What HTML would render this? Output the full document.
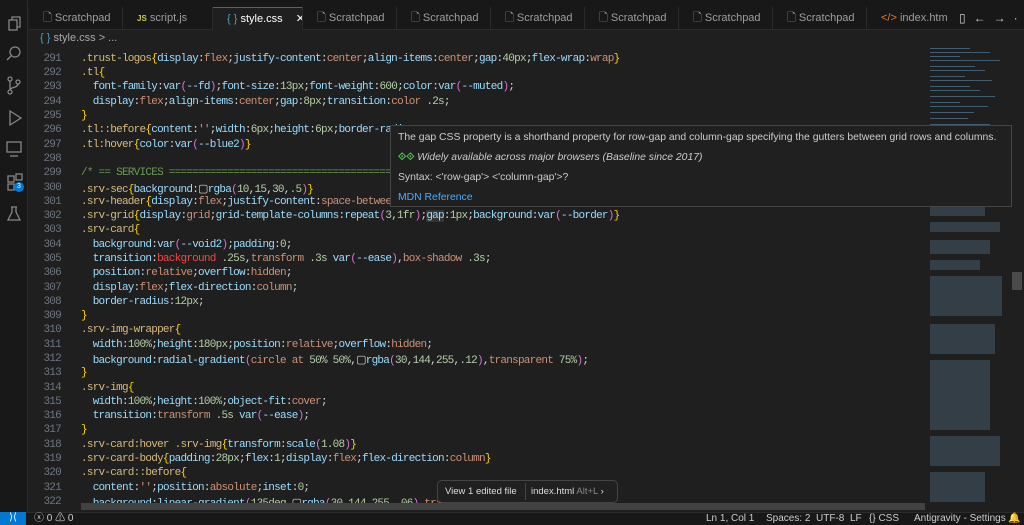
<!DOCTYPE html>
<html><head><meta charset="utf-8"><style>
*{margin:0;padding:0;box-sizing:border-box}
body{width:1024px;height:525px;background:#1f1f1f;overflow:hidden;position:relative;font-family:"Liberation Sans",sans-serif;color:#ccc}
.top{position:absolute;left:0;top:0;width:1024px;height:8px;background:#181818}
.act{position:absolute;left:0;top:0;width:28px;height:512px;background:#181818;border-right:1px solid #2b2b2b}
.tabs{position:absolute;left:29px;top:7px;width:995px;height:23px;background:#181818;border-bottom:1px solid #2b2b2b}
.tab{position:absolute;top:0;height:23px;border-right:1px solid #2b2b2b;font-size:11px;line-height:23px;color:#9d9d9d;padding-left:14px;white-space:nowrap;overflow:hidden}
.tab.act2{background:#1f1f1f;color:#fff;border-top:1px solid #0078d4}
.bc{position:absolute;left:40px;top:32px;font-size:11px;color:#a9a9a9}
.code{position:absolute;left:29px;top:46px;width:896px;height:464px;overflow:hidden;font-family:"Liberation Mono",monospace;font-size:11px;letter-spacing:-0.75px}
.ln{position:absolute;left:0;width:32px;text-align:right;color:#6e7681}
.tx{position:absolute;left:52px;white-space:pre;color:#d4d4d4}
.s{color:#d7ba7d}.p{color:#9cdcfe}.v{color:#ce9178}.n{color:#b5cea8}.b{color:#ffd700}.q{color:#da70d6}.c{color:#6a9955}
.mini{position:absolute;left:925px;top:44px;width:85px;height:466px}
.status{position:absolute;left:0;top:512px;width:1024px;height:13px;background:#181818;border-top:1px solid #2b2b2b;font-size:10px;color:#ccc;line-height:12px}
.hover{position:absolute;left:390px;top:125px;width:622px;height:82px;background:#202020;border:1px solid #454545;font-size:10.4px;color:#ccc;overflow:hidden}
.hover div{position:absolute;left:7px;white-space:nowrap}
.wid{position:absolute;left:437px;top:480px;width:181px;height:23px;background:#202020;border:1px solid #454545;border-radius:5px;font-size:9.5px;line-height:21px;color:#ddd;white-space:nowrap}
</style></head><body>
<div class="top"></div>
<div class="act">
<svg width="28" height="240" style="position:absolute;left:0;top:8px" fill="none" stroke="#868686" stroke-width="1.3">
<rect x="9" y="12" width="8" height="10"/><path d="M12 12v-3h8v10h-3"/>
<circle cx="15" cy="44" r="5"/><path d="M11 48l-4 4"/>
<circle cx="10" cy="71" r="2"/><circle cx="10" cy="84" r="2"/><circle cx="18" cy="74" r="2"/><path d="M10 73v9M18 76c0 4-8 3-8 6"/>
<path d="M10 103v14l11-7z"/>
<rect x="7" y="134" width="14" height="10"/><path d="M10 148h8"/>
<rect x="8" y="168" width="6" height="6"/><rect x="8" y="176" width="6" height="6"/><rect x="16" y="176" width="6" height="6"/><rect x="16" y="166" width="6" height="6"/>
<path d="M11 199h6M12 199v5l-4 8h12l-4-8v-5"/>
</svg>
<div style="position:absolute;left:14px;top:182px;width:10px;height:10px;border-radius:5px;background:#0078d4;color:#fff;font-size:7px;text-align:center;line-height:10px">3</div>
</div>
<div class="tabs">
<div class="tab" style="left:0;width:94px">🗋 Scratchpad</div>
<div class="tab" style="left:94px;width:90px"><span style="color:#cbcb41;font-size:8px;font-weight:bold">JS</span> script.js</div>
<div class="tab act2" style="left:184px;width:90px"><span style="color:#519aba">{ }</span> style.css <span style="margin-left:10px">✕</span></div>
<div class="tab" style="left:274px;width:94px">🗋 Scratchpad</div>
<div class="tab" style="left:368px;width:94px">🗋 Scratchpad</div>
<div class="tab" style="left:462px;width:94px">🗋 Scratchpad</div>
<div class="tab" style="left:556px;width:94px">🗋 Scratchpad</div>
<div class="tab" style="left:650px;width:94px">🗋 Scratchpad</div>
<div class="tab" style="left:744px;width:94px">🗋 Scratchpad</div>
<div class="tab" style="left:838px;width:90px;border:none"><span style="color:#e37933">&lt;/&gt;</span> index.htm</div>
<div style="position:absolute;left:930px;top:0;font-size:12px;line-height:23px;color:#ccc;letter-spacing:8px;white-space:nowrap">▯←→···</div>
</div>
<div class="bc"><span style="color:#519aba">{ }</span> style.css &gt; ...</div>
<div class="code">
<div class="ln" style="top:7px">291</div><div class="tx" style="top:7px"><span class="s">.trust-logos</span><span class="b">{</span><span class="p">display</span>:<span class="v">flex</span>;<span class="p">justify-content</span>:<span class="v">center</span>;<span class="p">align-items</span>:<span class="v">center</span>;<span class="p">gap</span>:<span class="n">40px</span>;<span class="p">flex-wrap</span>:<span class="v">wrap</span><span class="b">}</span></div>
<div class="ln" style="top:21px">292</div><div class="tx" style="top:21px"><span class="s">.tl</span><span class="b">{</span></div>
<div class="ln" style="top:35px">293</div><div class="tx" style="top:35px">  <span class="p">font-family</span>:<span class="p">var</span><span class="q">(</span><span class="p">--fd</span><span class="q">)</span>;<span class="p">font-size</span>:<span class="n">13px</span>;<span class="p">font-weight</span>:<span class="n">600</span>;<span class="p">color</span>:<span class="p">var</span><span class="q">(</span><span class="p">--muted</span><span class="q">)</span>;</div>
<div class="ln" style="top:50px">294</div><div class="tx" style="top:50px">  <span class="p">display</span>:<span class="v">flex</span>;<span class="p">align-items</span>:<span class="v">center</span>;<span class="p">gap</span>:<span class="n">8px</span>;<span class="p">transition</span>:<span class="v">color</span> <span class="n">.2s</span>;</div>
<div class="ln" style="top:64px">295</div><div class="tx" style="top:64px"><span class="b">}</span></div>
<div class="ln" style="top:78px">296</div><div class="tx" style="top:78px"><span class="s">.tl::before</span><span class="b">{</span><span class="p">content</span>:<span class="v">''</span>;<span class="p">width</span>:<span class="n">6px</span>;<span class="p">height</span>:<span class="n">6px</span>;<span class="p">border-radius</span></div>
<div class="ln" style="top:93px">297</div><div class="tx" style="top:93px"><span class="s">.tl:hover</span><span class="b">{</span><span class="p">color</span>:<span class="p">var</span><span class="q">(</span><span class="p">--blue2</span><span class="q">)</span><span class="b">}</span></div>
<div class="ln" style="top:107px">298</div>
<div class="ln" style="top:121px">299</div><div class="tx c" style="top:121px">/* == SERVICES ======================================================================</div>
<div class="ln" style="top:136px">300</div><div class="tx" style="top:136px"><span class="s">.srv-sec</span><span class="b">{</span><span class="p">background</span>:▢<span class="p">rgba</span><span class="q">(</span><span class="n">10</span>,<span class="n">15</span>,<span class="n">30</span>,<span class="n">.5</span><span class="q">)</span><span class="b">}</span></div>
<div class="ln" style="top:150px">301</div><div class="tx" style="top:150px"><span class="s">.srv-header</span><span class="b">{</span><span class="p">display</span>:<span class="v">flex</span>;<span class="p">justify-content</span>:<span class="v">space-between</span></div>
<div class="ln" style="top:164px">302</div><div class="tx" style="top:164px"><span class="s">.srv-grid</span><span class="b">{</span><span class="p">display</span>:<span class="v">grid</span>;<span class="p">grid-template-columns</span>:<span class="p">repeat</span><span class="q">(</span><span class="n">3</span>,<span class="n">1fr</span><span class="q">)</span>;<span class="p" style="background:#333">gap</span>:<span class="n">1px</span>;<span class="p">background</span>:<span class="p">var</span><span class="q">(</span><span class="p">--border</span><span class="q">)</span><span class="b">}</span></div>
<div class="ln" style="top:178px">303</div><div class="tx" style="top:178px"><span class="s">.srv-card</span><span class="b">{</span></div>
<div class="ln" style="top:193px">304</div><div class="tx" style="top:193px">  <span class="p">background</span>:<span class="p">var</span><span class="q">(</span><span class="p">--void2</span><span class="q">)</span>;<span class="p">padding</span>:<span class="n">0</span>;</div>
<div class="ln" style="top:207px">305</div><div class="tx" style="top:207px">  <span class="p">transition</span>:<span style="color:#f44747">background</span> <span class="n">.25s</span>,<span class="v">transform</span> <span class="n">.3s</span> <span class="p">var</span><span class="q">(</span><span class="p">--ease</span><span class="q">)</span>,<span class="v">box-shadow</span> <span class="n">.3s</span>;</div>
<div class="ln" style="top:221px">306</div><div class="tx" style="top:221px">  <span class="p">position</span>:<span class="v">relative</span>;<span class="p">overflow</span>:<span class="v">hidden</span>;</div>
<div class="ln" style="top:236px">307</div><div class="tx" style="top:236px">  <span class="p">display</span>:<span class="v">flex</span>;<span class="p">flex-direction</span>:<span class="v">column</span>;</div>
<div class="ln" style="top:250px">308</div><div class="tx" style="top:250px">  <span class="p">border-radius</span>:<span class="n">12px</span>;</div>
<div class="ln" style="top:264px">309</div><div class="tx" style="top:264px"><span class="b">}</span></div>
<div class="ln" style="top:278px">310</div><div class="tx" style="top:278px"><span class="s">.srv-img-wrapper</span><span class="b">{</span></div>
<div class="ln" style="top:293px">311</div><div class="tx" style="top:293px">  <span class="p">width</span>:<span class="n">100%</span>;<span class="p">height</span>:<span class="n">180px</span>;<span class="p">position</span>:<span class="v">relative</span>;<span class="p">overflow</span>:<span class="v">hidden</span>;</div>
<div class="ln" style="top:307px">312</div><div class="tx" style="top:307px">  <span class="p">background</span>:<span class="p">radial-gradient</span><span class="q">(</span><span class="v">circle</span> <span class="v">at</span> <span class="n">50%</span> <span class="n">50%</span>,▢<span class="p">rgba</span><span class="q">(</span><span class="n">30</span>,<span class="n">144</span>,<span class="n">255</span>,<span class="n">.12</span><span class="q">)</span>,<span class="v">transparent</span> <span class="n">75%</span><span class="q">)</span>;</div>
<div class="ln" style="top:321px">313</div><div class="tx" style="top:321px"><span class="b">}</span></div>
<div class="ln" style="top:336px">314</div><div class="tx" style="top:336px"><span class="s">.srv-img</span><span class="b">{</span></div>
<div class="ln" style="top:350px">315</div><div class="tx" style="top:350px">  <span class="p">width</span>:<span class="n">100%</span>;<span class="p">height</span>:<span class="n">100%</span>;<span class="p">object-fit</span>:<span class="v">cover</span>;</div>
<div class="ln" style="top:364px">316</div><div class="tx" style="top:364px">  <span class="p">transition</span>:<span class="v">transform</span> <span class="n">.5s</span> <span class="p">var</span><span class="q">(</span><span class="p">--ease</span><span class="q">)</span>;</div>
<div class="ln" style="top:378px">317</div><div class="tx" style="top:378px"><span class="b">}</span></div>
<div class="ln" style="top:393px">318</div><div class="tx" style="top:393px"><span class="s">.srv-card:hover .srv-img</span><span class="b">{</span><span class="p">transform</span>:<span class="p">scale</span><span class="q">(</span><span class="n">1.08</span><span class="q">)</span><span class="b">}</span></div>
<div class="ln" style="top:407px">319</div><div class="tx" style="top:407px"><span class="s">.srv-card-body</span><span class="b">{</span><span class="p">padding</span>:<span class="n">28px</span>;<span class="p">flex</span>:<span class="n">1</span>;<span class="p">display</span>:<span class="v">flex</span>;<span class="p">flex-direction</span>:<span class="v">column</span><span class="b">}</span></div>
<div class="ln" style="top:421px">320</div><div class="tx" style="top:421px"><span class="s">.srv-card::before</span><span class="b">{</span></div>
<div class="ln" style="top:436px">321</div><div class="tx" style="top:436px">  <span class="p">content</span>:<span class="v">''</span>;<span class="p">position</span>:<span class="v">absolute</span>;<span class="p">inset</span>:<span class="n">0</span>;</div>
<div class="ln" style="top:450px">322</div><div class="tx" style="top:450px">  <span class="p">background</span>:<span class="p">linear-gradient</span><span class="q">(</span><span class="n">135deg</span>,▢<span class="p">rgba</span><span class="q">(</span><span class="n">30</span>,<span class="n">144</span>,<span class="n">255</span>,<span class="n">.06</span><span class="q">)</span>,<span class="v">transparent</span> <span class="n">60%</span><span class="q">)</span>;</div>
<div style="position:absolute;left:52px;top:457px;width:846px;height:7px;background:#424242"></div>
</div>
<div class="mini">
<svg width="85" height="466">
<g fill="#5c88a8" opacity=".6">
<rect x="5" y="4" width="40" height="1"/><rect x="5" y="8" width="60" height="1"/><rect x="5" y="12" width="30" height="1"/><rect x="5" y="16" width="70" height="1"/><rect x="5" y="22" width="45" height="1"/><rect x="5" y="26" width="55" height="1"/><rect x="5" y="32" width="35" height="1"/><rect x="5" y="36" width="62" height="1"/><rect x="5" y="42" width="40" height="1"/><rect x="5" y="46" width="50" height="1"/><rect x="5" y="52" width="65" height="1"/><rect x="5" y="58" width="30" height="1"/><rect x="5" y="62" width="58" height="1"/><rect x="5" y="68" width="44" height="1"/><rect x="5" y="74" width="38" height="1"/><rect x="5" y="80" width="60" height="1"/>
</g>
<g fill="#5c7890" opacity=".35">
<rect x="5" y="160" width="55" height="12"/><rect x="5" y="178" width="70" height="10"/><rect x="5" y="196" width="60" height="14"/><rect x="5" y="216" width="50" height="10"/><rect x="5" y="232" width="72" height="40"/><rect x="5" y="280" width="65" height="30"/><rect x="5" y="316" width="60" height="70"/><rect x="5" y="392" width="70" height="30"/><rect x="5" y="428" width="55" height="30"/>
</g>
</svg>
</div>
<div style="position:absolute;left:1012px;top:272px;width:10px;height:18px;background:#4a4a4a"></div>
<div class="hover">
<div style="top:6px">The gap CSS property is a shorthand property for row-gap and column-gap specifying the gutters between grid rows and columns.</div>
<div style="top:26px"><span style="color:#4ec94e;font-weight:bold">⟐⟐</span> <i>Widely available across major browsers (Baseline since 2017)</i></div>
<div style="top:46px">Syntax: &lt;'row-gap'&gt; &lt;'column-gap'&gt;?</div>
<div style="top:66px;color:#4daafc">MDN Reference</div>
</div>
<div class="wid"><span style="padding-left:7px">View 1 edited file</span><span style="position:absolute;left:87px;top:2px;height:17px;border-left:1px solid #454545"></span><span style="position:absolute;left:93px">index.html <span style="color:#888">Alt+L</span> ›</span></div>
<div class="status">
<div style="position:absolute;left:0;top:-1px;width:26px;height:13px;background:#0078d4;color:#fff;text-align:center;font-size:10px">⟩⟨</div>
<span style="position:absolute;left:34px">ⓧ 0 ⚠ 0</span>
<span style="position:absolute;left:706px">Ln 1, Col 1</span>
<span style="position:absolute;left:766px">Spaces: 2</span>
<span style="position:absolute;left:816px">UTF-8</span>
<span style="position:absolute;left:850px">LF</span>
<span style="position:absolute;left:869px">{} CSS</span>
<span style="position:absolute;left:914px">Antigravity - Settings</span>
<span style="position:absolute;left:1008px">🔔</span>
</div>
</body></html>
